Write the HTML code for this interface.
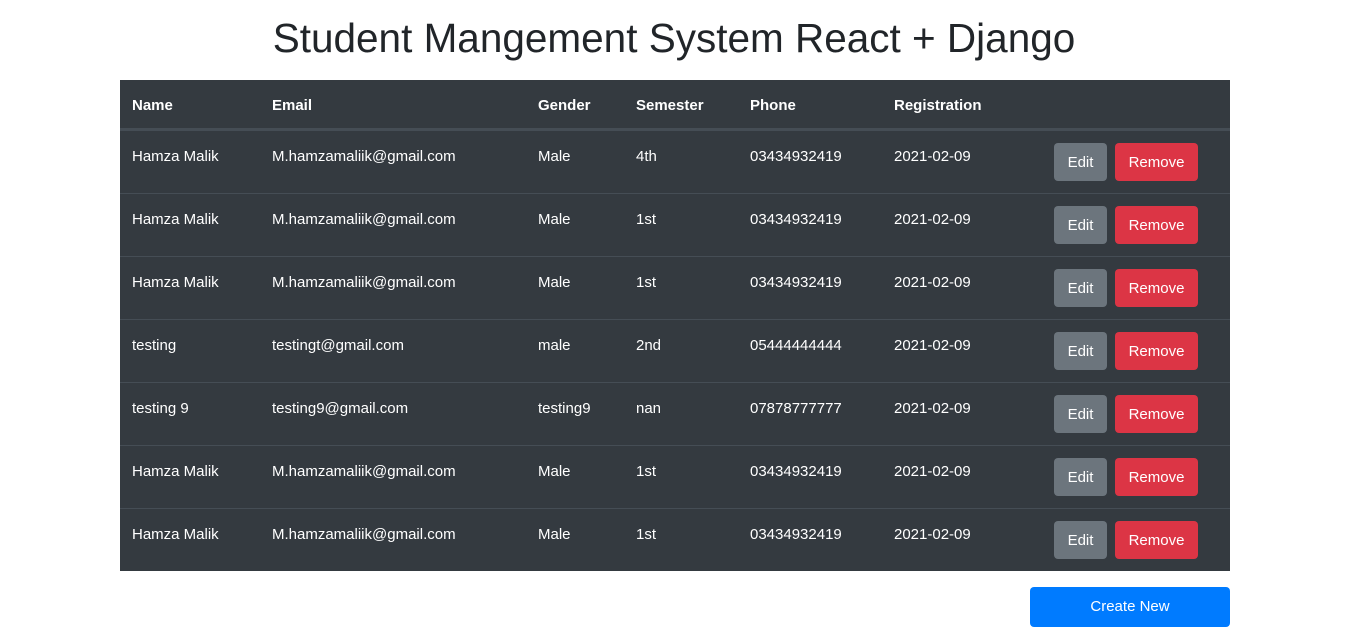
<!DOCTYPE html>
<html><head><meta charset="utf-8"><style>
body{margin:0;background:#fff;font-family:"Liberation Sans",sans-serif;width:1348px;height:624px;overflow:hidden;position:relative}
h1{position:absolute;top:14px;left:0;width:1348px;text-align:center;margin:0;font-weight:500;font-size:40.5px;color:#212529;line-height:48px}
.t{position:absolute;left:120px;top:80px;width:1110px;height:491px;background:#343a40;color:#fff}
.r{position:absolute;left:0;width:1110px;height:63px;border-top:1px solid #454d55;box-sizing:border-box}
.h{top:0;height:50px;border:none;border-bottom:2px solid #454d55;font-weight:bold}
.c{position:absolute;font-size:15px}
.h .c{top:17px}
.r .c{top:17px}
.b{position:absolute;top:12px;height:38px;border-radius:4px;color:#fff;font-size:15px;display:flex;align-items:center;justify-content:center;padding-top:1px;box-sizing:border-box}
.e{left:934px;width:53px;background:#6c757d}
.x{left:995px;width:83px;background:#dc3545}
.n{position:absolute;left:1030px;top:587px;width:200px;height:40px;background:#007bff;color:#fff;border-radius:4px;display:flex;align-items:center;justify-content:center;font-size:15px;box-sizing:border-box;padding-bottom:2px}
</style></head><body>
<h1>Student Mangement System React + Django</h1>
<div class="t">
<div class="r h"><span class="c" style="left:12px">Name</span><span class="c" style="left:152px">Email</span><span class="c" style="left:418px">Gender</span><span class="c" style="left:516px">Semester</span><span class="c" style="left:630px">Phone</span><span class="c" style="left:774px">Registration</span></div>
<div class="r" style="top:50px"><span class="c" style="left:12px">Hamza Malik</span><span class="c" style="left:152px">M.hamzamaliik@gmail.com</span><span class="c" style="left:418px">Male</span><span class="c" style="left:516px">4th</span><span class="c" style="left:630px">03434932419</span><span class="c" style="left:774px">2021-02-09</span><span class="b e">Edit</span><span class="b x">Remove</span></div>
<div class="r" style="top:113px"><span class="c" style="left:12px">Hamza Malik</span><span class="c" style="left:152px">M.hamzamaliik@gmail.com</span><span class="c" style="left:418px">Male</span><span class="c" style="left:516px">1st</span><span class="c" style="left:630px">03434932419</span><span class="c" style="left:774px">2021-02-09</span><span class="b e">Edit</span><span class="b x">Remove</span></div>
<div class="r" style="top:176px"><span class="c" style="left:12px">Hamza Malik</span><span class="c" style="left:152px">M.hamzamaliik@gmail.com</span><span class="c" style="left:418px">Male</span><span class="c" style="left:516px">1st</span><span class="c" style="left:630px">03434932419</span><span class="c" style="left:774px">2021-02-09</span><span class="b e">Edit</span><span class="b x">Remove</span></div>
<div class="r" style="top:239px"><span class="c" style="left:12px">testing</span><span class="c" style="left:152px">testingt@gmail.com</span><span class="c" style="left:418px">male</span><span class="c" style="left:516px">2nd</span><span class="c" style="left:630px">05444444444</span><span class="c" style="left:774px">2021-02-09</span><span class="b e">Edit</span><span class="b x">Remove</span></div>
<div class="r" style="top:302px"><span class="c" style="left:12px">testing 9</span><span class="c" style="left:152px">testing9@gmail.com</span><span class="c" style="left:418px">testing9</span><span class="c" style="left:516px">nan</span><span class="c" style="left:630px">07878777777</span><span class="c" style="left:774px">2021-02-09</span><span class="b e">Edit</span><span class="b x">Remove</span></div>
<div class="r" style="top:365px"><span class="c" style="left:12px">Hamza Malik</span><span class="c" style="left:152px">M.hamzamaliik@gmail.com</span><span class="c" style="left:418px">Male</span><span class="c" style="left:516px">1st</span><span class="c" style="left:630px">03434932419</span><span class="c" style="left:774px">2021-02-09</span><span class="b e">Edit</span><span class="b x">Remove</span></div>
<div class="r" style="top:428px"><span class="c" style="left:12px">Hamza Malik</span><span class="c" style="left:152px">M.hamzamaliik@gmail.com</span><span class="c" style="left:418px">Male</span><span class="c" style="left:516px">1st</span><span class="c" style="left:630px">03434932419</span><span class="c" style="left:774px">2021-02-09</span><span class="b e">Edit</span><span class="b x">Remove</span></div>
</div>
<div class="n">Create New</div>
</body></html>
